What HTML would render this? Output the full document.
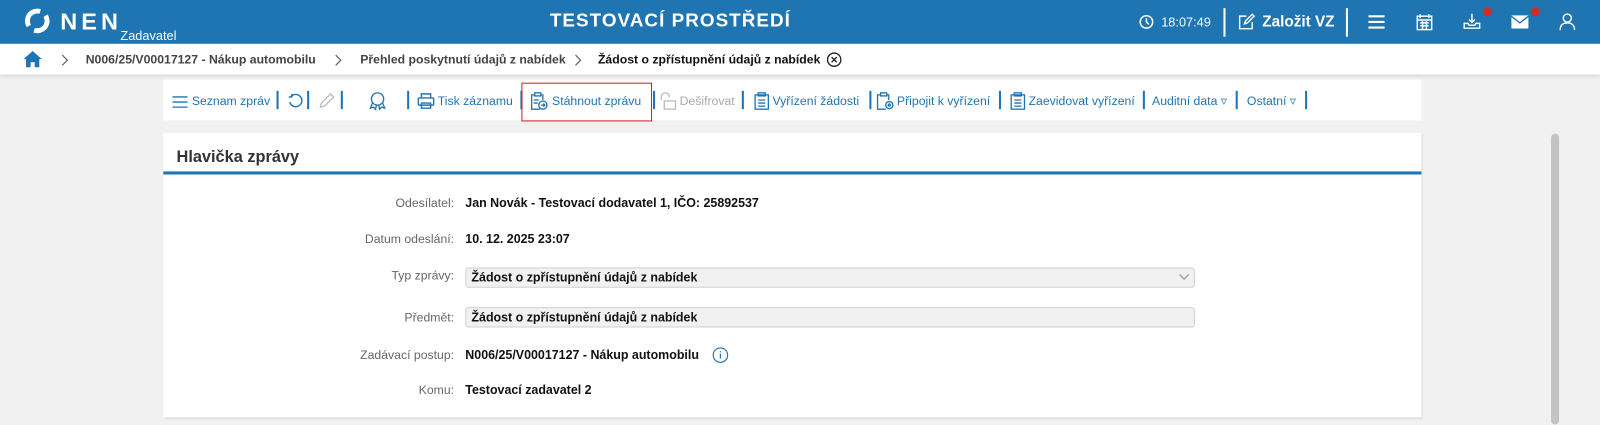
<!DOCTYPE html>
<html><head><meta charset="utf-8"><style>
*{box-sizing:border-box;margin:0;padding:0}
html,body{width:1600px;height:419px;overflow:hidden;background:#f1f1f1}
body{font-family:"Liberation Sans",sans-serif}
#w{position:absolute;left:0;top:0;width:1568px;height:411px;transform:scale(1.0204);transform-origin:0 0}
.a{position:absolute;white-space:nowrap;line-height:14px}
.hdr{left:0;top:0;width:1568px;height:43px;background:#1f74b2}
.bc{left:0;top:43px;width:1568px;height:30px;background:#fff;box-shadow:0 2px 4px rgba(0,0,0,.12)}
.bct{font-size:12px;font-weight:bold;color:#444;top:51px}
.tb{left:160px;top:78px;width:1233px;height:40px;background:#fff}
.ti{top:92px;font-size:12px;color:#1f74b2}
.sep{top:89px;width:2px;height:18px;background:#1f74b2}
.card{left:160px;top:130px;width:1233px;height:279px;background:#fff;box-shadow:1px 1px 2px rgba(0,0,0,.12)}
.lbl{font-size:12px;color:#666;text-align:right;width:200px;left:245px}
.val{font-size:12.2px;color:#111;font-weight:bold;left:456px}
.box{left:456px;width:715px;height:20px;background:#f1f1f1;border:1px solid #d0d0d0;border-radius:3px;font-size:12.2px;font-weight:bold;padding:2px 0 0 5px;color:#111}
</style></head><body><div id="w">
<div class="a hdr"></div>
<svg class="a" style="left:24px;top:8px" width="25" height="25" viewBox="0 0 26 26"><circle cx="13" cy="13" r="10" fill="none" stroke="#fff" stroke-width="5" stroke-dasharray="24 7" transform="rotate(-30 13 13)"/></svg>
<div class="a" style="left:59px;top:9px;font-size:23px;line-height:24px;font-weight:bold;color:#fff;letter-spacing:4px">NEN</div>
<div class="a" style="left:118px;top:28px;font-size:12.5px;color:#fff">Zadavatel</div>
<div class="a" style="left:0;width:1314px;text-align:center;top:10px;line-height:20px;font-size:18.5px;font-weight:bold;color:#fff;letter-spacing:1px">TESTOVACÍ PROSTŘEDÍ</div>
<svg class="a" style="left:1116px;top:14px" width="15" height="15" viewBox="0 0 16 16" fill="none" stroke="#fff" stroke-width="1.6"><circle cx="8" cy="8" r="6.5"/><path d="M8 4v4l2.5 2.5"/></svg>
<div class="a" style="left:1138px;top:15px;font-size:12.5px;color:#fff">18:07:49</div>
<div class="a" style="left:1199px;top:8px;width:2px;height:28px;background:#fff"></div>
<svg class="a" style="left:1213px;top:13px" width="17" height="17" viewBox="0 0 18 18" fill="none" stroke="#fff" stroke-width="1.5"><path d="M9 3H2v13h13V9"/><path d="M7 11l1-3 7-7 2 2-7 7z"/></svg>
<div class="a" style="left:1237px;top:14px;font-size:15px;line-height:16px;font-weight:bold;color:#fff">Založit VZ</div>
<div class="a" style="left:1319px;top:8px;width:2px;height:28px;background:#fff"></div>
<svg class="a" style="left:1341px;top:14px" width="16" height="15"><path d="M0 2h16M0 7.5h16M0 13h16" stroke="#fff" stroke-width="2"/></svg>
<svg class="a" style="left:1388px;top:13px" width="16" height="17" viewBox="0 0 17 18" fill="none" stroke="#fff" stroke-width="1.5"><rect x="1" y="3" width="15" height="14"/><path d="M4 1v4M13 1v4M1 7h15M4 10h9M4 13h9M6.5 8v9M10.5 8v9"/></svg>
<svg class="a" style="left:1434px;top:12px" width="17" height="18" viewBox="0 0 18 18" fill="none" stroke="#fff" stroke-width="1.5"><path d="M9 1v9M6 7l3 3 3-3M1 11v5h16v-5h-4l-1 2H6l-1-2z"/></svg>
<div class="a" style="left:1453px;top:7px;width:9px;height:9px;border-radius:50%;background:#d22b2b"></div>
<svg class="a" style="left:1481px;top:15px" width="17" height="13" viewBox="0 0 18 14"><rect width="18" height="14" rx="1" fill="#fff"/><path d="M0 1l9 7 9-7" stroke="#1f74b2" stroke-width="1.5" fill="none"/></svg>
<div class="a" style="left:1500px;top:7px;width:9px;height:9px;border-radius:50%;background:#d22b2b"></div>
<svg class="a" style="left:1528px;top:12px" width="16" height="18" viewBox="0 0 17 18" fill="none" stroke="#fff" stroke-width="1.5"><circle cx="8.5" cy="5.5" r="4.2"/><path d="M1 18c0-5 3-7.5 7.5-7.5S16 13 16 18"/></svg>

<div class="a bc"></div>
<svg class="a" style="left:23px;top:50px" width="18" height="16" viewBox="0 0 18 16"><path d="M9 0L0 8h2.5v8h4.5v-5h4v5h4.5V8H18z" fill="#1f74b2"/></svg>
<svg class="a" style="left:60px;top:53px" width="7" height="12"><path d="M1 1l5 5-5 5" stroke="#666" fill="none" stroke-width="1.2"/></svg>
<div class="a bct" style="left:84px">N006/25/V00017127 - Nákup automobilu</div>
<svg class="a" style="left:328px;top:53px" width="7" height="12"><path d="M1 1l5 5-5 5" stroke="#666" fill="none" stroke-width="1.2"/></svg>
<div class="a bct" style="left:353px">Přehled poskytnutí údajů z nabídek</div>
<svg class="a" style="left:563px;top:53px" width="7" height="12"><path d="M1 1l5 5-5 5" stroke="#666" fill="none" stroke-width="1.2"/></svg>
<div class="a bct" style="left:586px;color:#111">Žádost o zpřístupnění údajů z nabídek</div>
<svg class="a" style="left:810px;top:51px" width="15" height="15" viewBox="0 0 15 15" fill="none" stroke="#222" stroke-width="1.3"><circle cx="7.5" cy="7.5" r="6.5"/><path d="M5 5l5 5M10 5l-5 5"/></svg>

<div class="a tb"></div>
<svg class="a" style="left:169px;top:94px" width="15" height="12"><path d="M0 1h15M0 6h15M0 11h15" stroke="#1f74b2" stroke-width="1.3"/></svg>
<div class="a ti" style="left:188px">Seznam zpráv</div>
<div class="a sep" style="left:271px"></div>
<svg class="a" style="left:282px;top:91px" width="16" height="16" viewBox="0 0 16 16" fill="none" stroke="#1f74b2" stroke-width="1.4"><path d="M3 4A6 6 0 1 1 2 9"/><path d="M1 4h3V1"/></svg>
<div class="a sep" style="left:301px"></div>
<svg class="a" style="left:312px;top:90px" width="17" height="17" viewBox="0 0 17 17" fill="none" stroke="#bbb" stroke-width="1.3"><path d="M2 15l1-4 9-9 3 3-9 9z"/></svg>
<div class="a sep" style="left:334px"></div>
<svg class="a" style="left:360px;top:89px" width="20" height="20" viewBox="0 0 20 20" fill="none" stroke="#1f74b2" stroke-width="1.3"><circle cx="10" cy="8" r="6"/><path d="M5 12l-2 5 3-1 2 2 1-4M15 12l2 5-3-1-2 2-1-4"/></svg>
<div class="a sep" style="left:399px"></div>
<svg class="a" style="left:409px;top:91px" width="17" height="16" viewBox="0 0 17 16" fill="none" stroke="#1f74b2" stroke-width="1.4"><rect x="1" y="5" width="15" height="7" rx="1"/><path d="M4 5V1h9v4M4 10h9v5H4z"/></svg>
<div class="a ti" style="left:429px">Tisk záznamu</div>
<div class="a sep" style="left:510px"></div>
<div class="a" style="left:511px;top:81px;width:128px;height:38px;border:1px solid #d52020"></div>
<svg class="a" style="left:520px;top:90px" width="17" height="18" viewBox="0 0 17 18" fill="none" stroke="#1f74b2" stroke-width="1.3"><path d="M4 3H1v14h8M10 3h2v5"/><rect x="4" y="1" width="6" height="3"/><path d="M3 8h5M3 11h4"/><circle cx="12" cy="13" r="4"/><path d="M10 13h4M12.5 11.5L14 13l-1.5 1.5"/></svg>
<div class="a ti" style="left:541px">Stáhnout zprávu</div>
<div class="a sep" style="left:640px"></div>
<svg class="a" style="left:646px;top:90px" width="17" height="18" viewBox="0 0 17 18" fill="none" stroke="#bbb" stroke-width="1.3"><path d="M2 8V5a4 4 0 0 1 8 0"/><rect x="5" y="9" width="11" height="8"/></svg>
<div class="a ti" style="left:666px;color:#aaa">Dešifrovat</div>
<div class="a sep" style="left:727px"></div>
<svg class="a" style="left:739px;top:90px" width="15" height="18" viewBox="0 0 15 18" fill="none" stroke="#1f74b2" stroke-width="1.3"><rect x="1" y="3" width="13" height="14"/><rect x="4" y="1" width="7" height="3"/><path d="M4 8h7M4 11h7M4 14h7"/></svg>
<div class="a ti" style="left:757px">Vyřízení žádosti</div>
<div class="a sep" style="left:852px"></div>
<svg class="a" style="left:859px;top:90px" width="18" height="18" viewBox="0 0 18 18" fill="none" stroke="#1f74b2" stroke-width="1.3"><path d="M4 3H1v14h8M10 3h2v5"/><rect x="4" y="1" width="6" height="3"/><circle cx="12.5" cy="13" r="3.5"/><circle cx="12.5" cy="13" r="1"/></svg>
<div class="a ti" style="left:879px">Připojit k vyřízení</div>
<div class="a sep" style="left:979px"></div>
<svg class="a" style="left:990px;top:90px" width="15" height="18" viewBox="0 0 15 18" fill="none" stroke="#1f74b2" stroke-width="1.3"><rect x="1" y="3" width="13" height="14"/><rect x="4" y="1" width="7" height="3"/><path d="M4 8h7M4 11h7M4 14h7"/></svg>
<div class="a ti" style="left:1008px">Zaevidovat vyřízení</div>
<div class="a sep" style="left:1120px"></div>
<div class="a ti" style="left:1129px">Auditní data ▿</div>
<div class="a sep" style="left:1211px"></div>
<div class="a ti" style="left:1222px">Ostatní ▿</div>
<div class="a sep" style="left:1279px"></div>

<div class="a card"></div>
<div class="a" style="left:173px;top:146px;line-height:18px;font-size:16px;font-weight:bold;color:#333">Hlavička zprávy</div>
<div class="a" style="left:160px;top:168px;width:1233px;height:3px;background:#1f74b2"></div>
<div class="a lbl" style="top:192px">Odesílatel:</div>
<div class="a val" style="top:192px">Jan Novák - Testovací dodavatel 1, IČO: 25892537</div>
<div class="a lbl" style="top:227px">Datum odeslání:</div>
<div class="a val" style="top:227px">10. 12. 2025 23:07</div>
<div class="a lbl" style="top:263px">Typ zprávy:</div>
<div class="a box" style="top:262px">Žádost o zpřístupnění údajů z nabídek</div>
<svg class="a" style="left:1155px;top:268px" width="11" height="7"><path d="M1 1l4.5 4.5L10 1" stroke="#999" fill="none" stroke-width="1.2"/></svg>
<div class="a lbl" style="top:304px">Předmět:</div>
<div class="a box" style="top:301px">Žádost o zpřístupnění údajů z nabídek</div>
<div class="a lbl" style="top:341px">Zadávací postup:</div>
<div class="a val" style="top:341px">N006/25/V00017127 - Nákup automobilu</div>
<svg class="a" style="left:698px;top:340px" width="16" height="16" viewBox="0 0 17 17" fill="none" stroke="#1f74b2" stroke-width="1.2"><circle cx="8.5" cy="8.5" r="7.5"/><path d="M8.5 7v5M8.5 4.5v1"/></svg>
<div class="a lbl" style="top:375px">Komu:</div>
<div class="a val" style="top:375px">Testovací zadavatel 2</div>

<div class="a" style="left:1520px;top:131px;width:8px;height:285px;border-radius:4px;background:#c3c3c3"></div>
</div></body></html>
